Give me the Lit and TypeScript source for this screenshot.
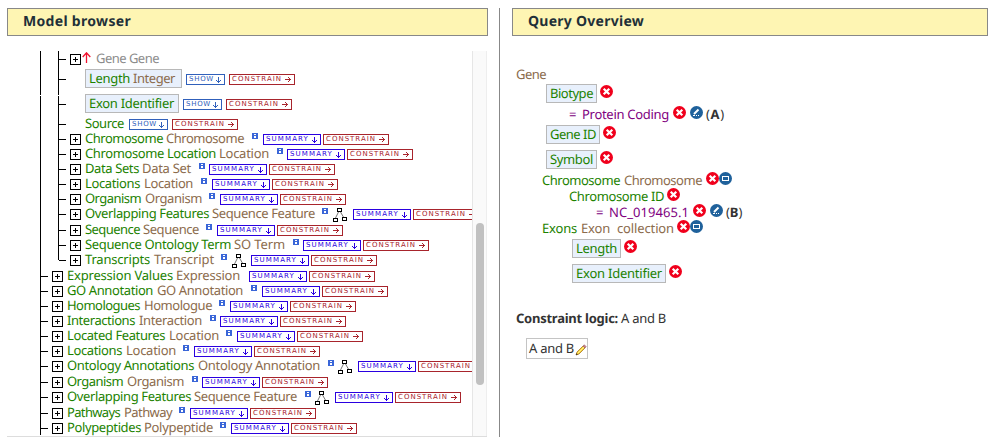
import { LitElement, html, css, svg } from "lit";
import { customElement } from "lit/decorators.js";

type Kind =
  | "name" | "type" | "muted" | "value" | "code" | "strong" | "plain"
  | "show" | "summary" | "constrain" | "info" | "tree" | "up" | "plus"
  | "remove" | "edit" | "collapse" | "box";

interface Item {
  kind: Kind;
  gap?: number;
  text?: string;
  width?: number;
  items?: Item[];
}

interface Row {
  height: number;
  level: number;
  last?: boolean;
  split?: boolean;
  items: Item[];
}

const SANS = '"Noto Sans", "Open Sans", sans-serif';
const PIXEL = '"DejaVu Sans", sans-serif';
const pen = document.createElement("canvas").getContext("2d")!;

/** Letter spacing that makes a text fill the given width. */
function tracking(text: string, width: number, font: string): string {
  pen.font = font;
  return ((width - pen.measureText(text).width) / text.length).toFixed(3) + "px";
}

const t = (kind: Kind, text: string, width: number, gap = 0): Item => ({ kind, text, width, gap });
const i = (kind: Kind, gap = 0): Item => ({ kind, gap });
const box = (width: number, gap: number, ...items: Item[]): Item => ({ kind: "box", width, gap, items });

/** A tree entry; x values are measured from the left edge of its name. */
function entry(
  level: number, height: number, name: string, nameW: number, type: string, typeX: number, typeW: number,
  infoX: number | null, treeX: number | null, buttonX: number, last = false,
): Row {
  const items: Item[] = [i("plus"), t("name", name, nameW, 4), t("type", type, typeW, typeX - nameW)];
  let end = typeX + typeW;
  if (infoX !== null) { items.push(i("info", infoX - end)); end = infoX + 6; }
  if (treeX !== null) { items.push(i("tree", treeX - end)); end = treeX + 14; }
  items.push(i("summary", buttonX - end), i("constrain", 2));
  return { level, height, items, last };
}

const MODEL: Row[] = [
  { level: 2, height: 20, items: [i("plus"), i("up", 1), t("muted", "Gene Gene", 63, 5)] },
  { level: 2, height: 25, split: true, items: [
    box(97, 15, t("name", "Length", 41), t("type", "Integer", 42, 3)), i("show", 4), i("constrain", 4)] },
  { level: 2, height: 20, items: [box(94, 15, t("name", "Exon Identifier", 85)), i("show", 4), i("constrain", 4)] },
  { level: 2, height: 15, items: [t("name", "Source", 39, 15), i("show", 5), i("constrain", 4)] },
  entry(2, 15, "Chromosome", 78, "Chromosome", 81, 78, 167, null, 178),
  entry(2, 15, "Chromosome Location", 131, "Location", 134, 50, 192, null, 202),
  entry(2, 15, "Data Sets", 54, "Data Set", 57, 49, 114, null, 124),
  entry(2, 15, "Locations", 55, "Location", 59, 49, 116, null, 127),
  entry(2, 15, "Organism", 56, "Organism", 60, 57, 124, null, 135),
  entry(2, 16, "Overlapping Features", 124, "Sequence Feature", 127, 103, 237, 248, 268),
  entry(2, 15, "Sequence", 55, "Sequence", 58, 56, 121, null, 132),
  entry(2, 15, "Sequence Ontology Term", 146, "SO Term", 149, 51, 208, null, 218),
  entry(2, 16, "Transcripts", 65, "Transcript", 69, 60, 136, 147, 166, true),
  entry(1, 15, "Expression Values", 106, "Expression", 109, 64, null, null, 182),
  entry(1, 15, "GO Annotation", 86, "GO Annotation", 90, 86, 184, null, 195),
  entry(1, 15, "Homologues", 73, "Homologue", 77, 68, 152, null, 163),
  entry(1, 15, "Interactions", 68, "Interaction", 72, 63, 143, null, 153),
  entry(1, 15, "Located Features", 98, "Location", 102, 50, 159, null, 170),
  entry(1, 15, "Locations", 55, "Location", 59, 50, 116, null, 127),
  entry(1, 16, "Ontology Annotations", 127, "Ontology Annotation", 131, 122, 261, 271, 291),
  entry(1, 15, "Organism", 56, "Organism", 60, 57, 125, null, 135),
  entry(1, 16, "Overlapping Features", 124, "Sequence Feature", 127, 103, 238, 248, 268),
  entry(1, 15, "Pathways", 53, "Pathway", 57, 48, 112, null, 123),
  entry(1, 15, "Polypeptides", 74, "Polypeptide", 77, 69, 153, null, 164),
];

const QUERY: { height: number; items: Item[] }[] = [
  { height: 19, items: [t("type", "Gene", 30, 4)] },
  { height: 21, items: [box(51, 34, t("name", "Biotype", 43)), i("remove", 3)] },
  { height: 20, items: [t("value", "=", 9, 57), t("value", "Protein Coding", 87, 4), i("remove", 4), i("edit", 4), t("code", "A", 18, 3)] },
  { height: 25, items: [box(54, 34, t("name", "Gene ID", 46)), i("remove", 3)] },
  { height: 21, items: [box(51, 34, t("name", "Symbol", 43)), i("remove", 3)] },
  { height: 16, items: [t("name", "Chromosome", 78, 30), t("type", "Chromosome", 78, 4), i("remove", 4), i("collapse")] },
  { height: 16, items: [t("name", "Chromosome ID", 95, 57), i("remove", 3)] },
  { height: 16, items: [t("value", "=", 9, 84), t("value", "NC_019465.1", 80, 4), i("remove", 4), i("edit", 4), t("code", "B", 16, 3)] },
  { height: 20, items: [t("name", "Exons", 35, 30), t("type", "Exon", 29, 4), t("type", "collection", 57, 7), i("remove", 3), i("collapse")] },
  { height: 25, items: [box(49, 60, t("name", "Length", 41)), i("remove", 3)] },
  { height: 45, items: [box(94, 60, t("name", "Exon Identifier", 86)), i("remove", 3)] },
  { height: 21, items: [t("strong", "Constraint logic:", 102, 4), t("plain", "A and B", 45, 3)] },
];

const down = svg`<path d="M2.5 0V6M0 3.5H1M4 3.5H5M1 4.5H2M3 4.5H4" />`;
const right = svg`<path d="M0 2.5H6M3 0.5H4M4 1.5H5M4 3.5H5M3 4.5H4" />`;

@customElement("app-root")
export class AppRoot extends LitElement {
  static styles = css`
    :host {
      display: block;
      width: 993px;
      height: 437px;
      overflow: hidden;
      background: #fff;
      font: 13px/16px "Noto Sans", "Open Sans", sans-serif;
      text-rendering: geometricPrecision;
      color: #333;
    }
    .page { display: flex; height: 437px; padding: 8px 5px 0 7px; box-sizing: border-box; }
    .left { width: 481px; }
    .right { width: 476px; margin-left: 12px; }
    .divider { width: 1px; margin-left: 11px; background: #888; }
    .title {
      box-sizing: border-box;
      height: 28px;
      padding-left: 15px;
      border: 1px solid #888;
      background: #fef5b3;
      color: #1f3038;
      font-size: 14px;
      font-weight: 700;
      line-height: 25px;
    }
    .browser { display: flex; height: 385px; margin-top: 15px; border-bottom: 1px solid #ddd; width: 480px; }
    .rows { flex: none; width: 465px; overflow: hidden; }
    .bar { width: 15px; box-sizing: border-box; border-left: 1px solid #e6e6e6; border-right: 1px solid #eee; background: #fafafa; padding: 172px 3px 0 3px; }
    .thumb { width: 8px; height: 162px; border-radius: 4px; background: #c1c1c1; }
    .row { display: flex; }
    .row > * { flex: none; }
    .rail { width: 18px; border-left: 1px solid #000; box-sizing: border-box; }
    .first { margin-left: 33px; }
    .stem { border-left: 1px solid #000; box-sizing: border-box; }
    .stem.end { height: 8px; }
    .tick { width: 7px; height: 1px; margin-top: 8px; background: #000; }
    .split .rail, .split .stem {
      border-image: linear-gradient(#000 0 23px, #fff 23px 24px, #000 24px) 1;
    }
    .items { display: flex; align-items: flex-start; height: 16px; white-space: pre; }
    .row .items { margin-left: 4px; }
    .items > * { flex: none; }
    .text { display: block; height: 14px; line-height: 14px; white-space: pre; }
    .name { color: #1c8200; }
    .type { color: #8b6b4c; }
    .muted { color: #8c8c8c; }
    .value { color: #800080; }
    .strong { font-weight: 700; }
    .code b { font-weight: 700; }
    .box {
      display: flex;
      box-sizing: border-box;
      height: 19px;
      margin-top: -2px;
      padding: 1px 0 0 3px;
      border: 1px solid #b8b8b8;
      background: #e8f0fc;
    }
    .button {
      display: flex;
      justify-content: space-between;
      box-sizing: border-box;
      height: 11px;
      margin-top: 3px;
      padding: 0 3px 0 2px;
      border: 1px solid;
      font: 7px/9px "DejaVu Sans", sans-serif;
    }
    .button svg { margin-top: 2px; stroke: currentColor; fill: none; }
    .show { width: 39px; color: #3060bb; }
    .summary { width: 58px; color: #2a00e0; }
    .constrain { width: 66px; color: #a8242c; }
    svg { display: block; flex: none; }
    .crisp { shape-rendering: crispEdges; }
    .plus { margin-top: 3px; }
    .info { margin-top: 2px; }
    .tree { margin-top: 2px; }
    .up { margin-top: 1px; }
    .query { margin-top: 31px; }
    .round { margin-top: -1px; }
    .logic {
      display: flex;
      box-sizing: border-box;
      width: 62px;
      height: 21px;
      margin: 6px 0 0 14px;
      padding: 2px 0 0 2px;
      border: 1px solid #c4c4c4;
    }
    .pencil { margin: 3px 0 0 1px; }
  `;

  private text(item: Item, gap: string) {
    const text = item.kind === "code" ? `(${item.text})` : item.text!;
    const weight = item.kind === "strong" ? "bold " : "";
    const style = `margin-left:${gap};width:${item.width}px;letter-spacing:${tracking(text, item.width!, `${weight}13px ${SANS}`)}`;
    return item.kind === "code"
      ? html`<span class="text code" style=${style}>(<b>${item.text}</b>)</span>`
      : html`<span class="text ${item.kind}" style=${style}>${text}</span>`;
  }

  private button(kind: "show" | "summary" | "constrain", gap: string) {
    const width = { show: 25, summary: 43, constrain: 50 }[kind];
    const label = kind.toUpperCase();
    return html`<span class="button ${kind}" style="margin-left:${gap}"
      ><span style="letter-spacing:${tracking(label, width, `7px ${PIXEL}`)}">${label}</span
      ><svg class="crisp" width=${kind === "constrain" ? 6 : 5} height="6">${kind === "constrain" ? right : down}</svg></span>`;
  }

  private item(item: Item): unknown {
    const gap = `${item.gap ?? 0}px`;
    const style = `margin-left:${gap}`;
    switch (item.kind) {
      case "show":
      case "summary":
      case "constrain":
        return this.button(item.kind, gap);
      case "box":
        return html`<span class="box" style="${style};width:${item.width}px">${item.items!.map((x) => this.item(x))}</span>`;
      case "plus":
        return html`<svg class="plus crisp" style=${style} width="11" height="11">
          <path d="M.5 .5H10.5V10.5H.5ZM3 5.5H8M5.5 3V8" fill="none" stroke="#000" /></svg>`;
      case "info":
        return html`<svg class="info crisp" style=${style} width="6" height="6">
          <rect width="6" height="6" fill="#3a66d8" />
          <path d="M2 1.5H4M2 3.5H4M3 3V5M2 4.5H4" stroke="#fff" fill="none" /></svg>`;
      case "tree":
        return html`<svg class="tree" style=${style} width="14" height="14" fill="#fff" stroke="#000">
          <path d="M5.5 4L2.5 10M7.5 4L11 10" stroke="#777" fill="none" />
          <path class="crisp" d="M4.5 .5H8.5V3.5H4.5ZM.5 10.5H4.5V13.5H.5ZM9.5 9.5H13.5V12.5H9.5Z" /></svg>`;
      case "up":
        return html`<svg class="up" style=${style} width="9" height="11" fill="none" stroke="#f01430" stroke-width="1.3">
          <path d="M4.5 11V.8M.7 5L4.5 .8L8.3 5" /></svg>`;
      case "remove":
        return html`<svg class="round" style=${style} width="13" height="13">
          <circle cx="6.5" cy="6.5" r="6.5" fill="#f0001c" />
          <path d="M3.7 3.7L9.3 9.3M9.3 3.7L3.7 9.3" stroke="#fff" stroke-width="2.2" /></svg>`;
      case "edit":
        return html`<svg class="round" style=${style} width="13" height="13">
          <circle cx="6.5" cy="6.5" r="6.5" fill="#1f619b" />
          <path d="M4 8L8.5 3.5" stroke="#fff" stroke-width="2" />
          <path class="crisp" d="M3 9.5H5M6 9.5H7M8 9.5H9" stroke="#fff" /></svg>`;
      case "collapse":
        return html`<svg class="round" style=${style} width="13" height="13">
          <circle cx="6.5" cy="6.5" r="6.5" fill="#1f619b" />
          <rect class="crisp" x="3.5" y="4.5" width="6" height="4" fill="none" stroke="#fff" /></svg>`;
      default:
        return this.text(item, gap);
    }
  }

  private row(row: Row) {
    return html`<div class="row ${row.split ? "split" : ""}" style="height:${row.height}px">
      ${row.level === 2
        ? html`<span class="rail first"></span><span class="stem ${row.last ? "end" : ""}"></span>`
        : html`<span class="stem first"></span>`}
      <span class="tick"></span>
      <div class="items">${row.items.map((x) => this.item(x))}</div>
    </div>`;
  }

  render() {
    return html`<div class="page">
      <section class="left">
        <div class="title"><span style="letter-spacing:${tracking("Model browser", 108, `bold 14px ${SANS}`)}">Model browser</span></div>
        <div class="browser">
          <div class="rows">${MODEL.map((r) => this.row(r))}</div>
          <div class="bar"><div class="thumb"></div></div>
        </div>
      </section>
      <div class="divider"></div>
      <section class="right">
        <div class="title"><span style="letter-spacing:${tracking("Query Overview", 116, `bold 14px ${SANS}`)}">Query Overview</span></div>
        <div class="query">
          ${QUERY.map((r) => html`<div style="height:${r.height}px"><div class="items">${r.items.map((x) => this.item(x))}</div></div>`)}
        </div>
        <div class="logic">
          ${this.item(t("plain", "A and B", 45))}
          <svg class="pencil" width="12" height="12">
            <path d="M1 11L2 8L8 2L10 4L4 10Z" fill="#f7d535" stroke="#a8742a" stroke-width=".8" />
            <path d="M3 9L9 3" stroke="#fff08a" />
            <path d="M8 2L9.3 .8L11.2 2.7L10 4Z" fill="#d98080" stroke="#8c6070" stroke-width=".6" />
            <path d="M1 11L1.6 9.2L2.8 10.4Z" fill="#222" />
          </svg>
        </div>
      </section>
    </div>`;
  }
}
